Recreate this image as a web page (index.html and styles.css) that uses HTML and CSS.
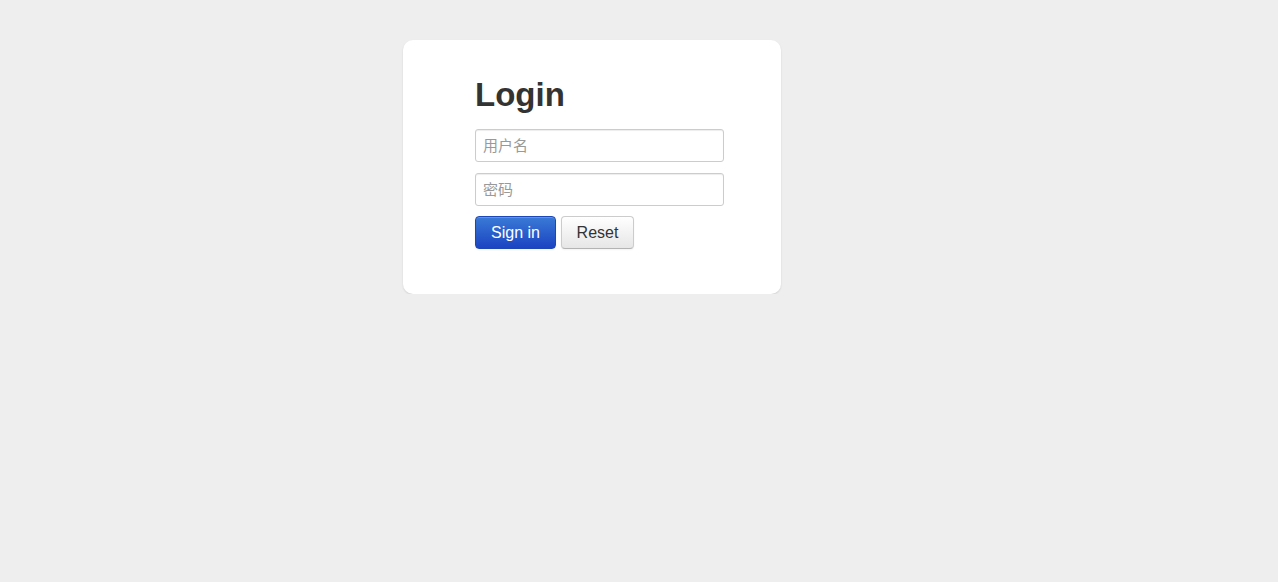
FILE: index.html
```html
<!DOCTYPE html>
<html>
<head>
<meta charset="utf-8">
<title>Login</title>
<link rel="stylesheet" href="styles.css">
</head>
<body>
<div class="page">
  <form class="card">
    <h2 class="title">Login</h2>
    <input class="field field-user" type="text" placeholder="用户名">
    <input class="field" type="password" placeholder="密码">
    <div class="actions">
      <button type="submit" class="btn btn-primary">Sign in</button>
      <button type="reset" class="btn btn-default">Reset</button>
    </div>
  </form>
</div>
</body>
</html>
```
FILE: styles.css
```css
html, body {
  margin: 0;
  padding: 0;
  background: #eeeeee;
  font-family: "Liberation Sans", Arial, "Noto Sans CJK SC", sans-serif;
  color: #333333;
}
.page {
  padding: 40px 0 0 403px;
}
.card {
  box-sizing: border-box;
  width: 378px;
  height: 254px;
  margin: 0;
  padding: 35px 56px 0 72px;
  background: #ffffff;
  border-radius: 10px;
  box-shadow: 0 1px 2px rgba(0, 0, 0, 0.12);
  display: flex;
  flex-direction: column;
  align-items: flex-start;
}
.title {
  margin: 0 0 14px 0;
  font-size: 33px;
  line-height: 40px;
  font-weight: bold;
  color: #333333;
}
.field {
  box-sizing: border-box;
  width: 249px;
  height: 33px;
  margin: 0 0 10px 0;
  padding: 4px 7px;
  border: 1px solid #cccccc;
  border-radius: 3px;
  box-shadow: inset 0 1px 1px rgba(0, 0, 0, 0.075);
  font-family: "Liberation Sans", Arial, "Noto Sans CJK SC", sans-serif;
  font-size: 15px;
  color: #555555;
  background: #ffffff;
  outline: none;
}
.field-user {
  margin-bottom: 11px;
}
.field::placeholder {
  color: #999999;
}
.actions {
  display: flex;
  gap: 5px;
}
.btn {
  box-sizing: border-box;
  height: 33px;
  padding: 0;
  border: 1px solid #cccccc;
  border-bottom-color: #b3b3b3;
  border-radius: 4px;
  background: linear-gradient(to bottom, #ffffff, #e6e6e6);
  color: #333333;
  font-family: "Liberation Sans", Arial, sans-serif;
  font-size: 16px;
  line-height: 20px;
  box-shadow: inset 0 1px 0 rgba(255, 255, 255, 0.2), 0 1px 2px rgba(0, 0, 0, 0.05);
  cursor: pointer;
}
.btn-primary {
  width: 81px;
  color: #ffffff;
  border-color: #1d47b5;
  background: linear-gradient(to bottom, #3a7ad6, #1b44c2);
}
.btn-default {
  width: 73px;
}
```
